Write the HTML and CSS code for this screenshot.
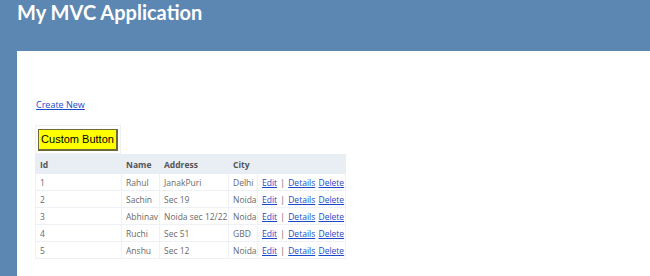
FILE: index.html
```html
<!DOCTYPE html>
<html lang="en">
<head>
    <meta charset="UTF-8">
    <title>Index</title>
    <link rel="stylesheet" href="styles.css">
</head>
<body>
    <div class="page">
        <header class="header">
            <h1 class="title">My MVC Application</h1>
        </header>
        <main class="main">
            <p class="create"><a href="#">Create New</a></p>
            <div class="btn-box">
                <button class="custom-btn">Custom Button</button>
            </div>
            <table class="grid">
                <colgroup>
                    <col class="c-id">
                    <col class="c-name">
                    <col class="c-addr">
                    <col class="c-city">
                    <col class="c-act">
                </colgroup>
                <tr>
                    <th>Id</th>
                    <th>Name</th>
                    <th>Address</th>
                    <th>City</th>
                    <th></th>
                </tr>
                <tr>
                    <td>1</td><td>Rahul</td><td>JanakPuri</td><td>Delhi</td>
                    <td class="actions"><a href="#">Edit</a> | <a href="#">Details</a> <a href="#">Delete</a></td>
                </tr>
                <tr>
                    <td>2</td><td>Sachin</td><td>Sec 19</td><td>Noida</td>
                    <td class="actions"><a href="#">Edit</a> | <a href="#">Details</a> <a href="#">Delete</a></td>
                </tr>
                <tr>
                    <td>3</td><td>Abhinav</td><td>Noida sec 12/22</td><td>Noida</td>
                    <td class="actions"><a href="#">Edit</a> | <a href="#">Details</a> <a href="#">Delete</a></td>
                </tr>
                <tr>
                    <td>4</td><td>Ruchi</td><td>Sec 51</td><td>GBD</td>
                    <td class="actions"><a href="#">Edit</a> | <a href="#">Details</a> <a href="#">Delete</a></td>
                </tr>
                <tr>
                    <td>5</td><td>Anshu</td><td>Sec 12</td><td>Noida</td>
                    <td class="actions"><a href="#">Edit</a> | <a href="#">Details</a> <a href="#">Delete</a></td>
                </tr>
            </table>
        </main>
    </div>
</body>
</html>
```

FILE: styles.css
```css
body {
    margin: 0;
    padding: 0;
    background-color: #5c87b2;
    font-family: "Open Sans", sans-serif;
    color: #696969;
}
.page {
    height: 276px;
    overflow: hidden;
}
.header {
    height: 51px;
    padding-left: 17px;
}
.title {
    margin: 0;
    color: white;
    font-family: Lato, sans-serif;
    font-size: 20px;
    font-weight: 700;
    line-height: 25px;
}
.main {
    margin-left: 17px;
    background-color: white;
    padding: 48px 0 0 19px;
    height: 300px;
}
.create {
    margin: 0 0 14px 0;
    font-size: 9px;
    line-height: 12px;
}
.create a {
    color: #1c49c8;
}
.btn-box {
    display: flex;
    width: max-content;
    border: 1px solid #f0f0f0;
    padding: 3px 2px 2px 2px;
    margin-left: -1px;
}
.custom-btn {
    background-color: #ffff00;
    border: 1px solid #6b6a3a;
    border-right-width: 2px;
    border-bottom-width: 2px;
    width: 80px;
    height: 22px;
    padding: 0 0 1px 0;
    white-space: nowrap;
    font-family: "Liberation Sans", Arial, sans-serif;
    font-size: 11px;
    color: #000;
}
.grid {
    border-collapse: collapse;
    table-layout: fixed;
    width: 310px;
    margin-left: -1px;
    font-size: 8.5px;
}
.c-id { width: 86px; }
.c-name { width: 38px; }
.c-addr { width: 69px; }
.c-city { width: 29px; }
.c-act { width: 88px; }
.grid th {
    background-color: #e8eef4;
    text-align: left;
    font-weight: 700;
    height: 18px;
    padding: 0 4px;
    border: 1px solid #e8eef4;
    color: #555;
}
.grid td {
    height: 16px;
    padding: 0 4px;
    border: 1px solid #eef2f6;
    white-space: nowrap;
    overflow: hidden;
}
.grid .actions {
    padding-right: 0;
    word-spacing: 1px;
}
.grid a {
    color: #1c49c8;
}
```
